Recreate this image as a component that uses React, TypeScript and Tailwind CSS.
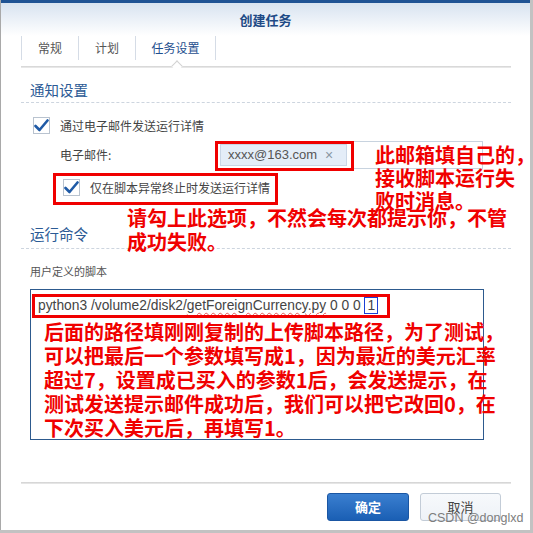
import React from "react";

const cjk = { fontFamily: '"Noto Sans CJK SC", "Noto Sans", sans-serif' };
const latin = { fontFamily: '"Liberation Sans", "Noto Sans CJK SC", sans-serif' };

function Check() {
  return (
    <div className="w-[17px] h-[17px] border border-[#b9c3cf] bg-white flex items-center justify-center shrink-0">
      <svg width="15" height="13" viewBox="0 0 15 13">
        <path d="M1.5 7 L5.5 11 L13.5 1.5" fill="none" stroke="#1f5aa6" strokeWidth="2.6" strokeLinecap="round" strokeLinejoin="round" />
      </svg>
    </div>
  );
}

export default function App() {
  return (
    <div className="w-[533px] h-[533px] bg-[#c2c2c2] relative overflow-hidden" style={cjk}>
      <div className="w-[530px] h-[530px] bg-white border-l border-[#a9a9a9] flex flex-col relative">
        <div className="h-[3px] bg-[#1f5394]" />
        <div className="h-[33px] bg-gradient-to-b from-[#d8e3f0] to-white flex items-center justify-center">
          <span className="text-[13px] font-bold text-[#1f4b86]">创建任务</span>
        </div>
        <div className="ml-[20px] flex h-[24px] text-[12px]">
          <div className="w-[57px] border-l border-[#d5dce6] flex items-center justify-center text-[#555]">常规</div>
          <div className="w-[57px] border-l border-[#d5dce6] flex items-center justify-center text-[#555]">计划</div>
          <div className="w-[81px] border-l border-r border-[#d5dce6] flex items-center justify-center text-[#1f4f8f]">任务设置</div>
        </div>
        <div className="ml-[20px] w-[490px] mt-[6px] relative">
          <div className="h-[2px] bg-gradient-to-b from-[#d2d2d2] to-[#eeeeee]" />
          <div className="absolute left-[152px] top-[-4px] w-[8px] h-[8px] bg-white border-l border-t border-[#d2d2d2] rotate-45" />
        </div>
        <div className="ml-[20px] w-[490px] flex flex-col">
          <div className="mt-[12px] h-[20px] leading-[20px] pl-[9px] text-[14.5px] text-[#2b5a95]">通知设置</div>
          <div className="mt-[2px] border-t border-dashed border-[#cdd5df]" />
          <div className="mt-[14px] h-[17px] flex items-center pl-[12px] gap-[10px] text-[12px] text-[#444]">
            <Check />
            <span>通过电子邮件发送运行详情</span>
          </div>
          <div className="mt-[7px] h-[28px] flex items-center text-[12px] text-[#444]">
            <div className="w-[194px] pl-[39px]">电子邮件:</div>
            <div className="w-[268px] h-[28px] border border-[#c8d3df] flex items-center pl-[4px]">
              <div className="w-[127px] h-[22px] bg-[#e4edf8] border border-[#c9d6e6] flex items-center pl-[7px] text-[13px] text-[#555]" style={latin}>
                <span>xxxx@163.com</span>
                <span className="ml-[8px] text-[#8a96a3] text-[14px]">×</span>
              </div>
            </div>
          </div>
          <div className="mt-[10px] h-[17px] flex items-center pl-[42px] gap-[10px] text-[12px] text-[#444]">
            <Check />
            <span>仅在脚本异常终止时发送运行详情</span>
          </div>
          <div className="mt-[28px] h-[20px] leading-[20px] pl-[9px] text-[14.5px] text-[#2b5a95]">运行命令</div>
          <div className="mt-[4px] border-t border-dashed border-[#cdd5df]" />
          <div className="mt-[14px] h-[16px] leading-[16px] pl-[9px] text-[11px] text-[#555]">用户定义的脚本</div>
          <div className="mt-[10px] ml-[9px] w-[454px] h-[151px] border border-[#2d5a8e] pl-[7px] pt-[6px]">
            <div className="h-[20px] leading-[20px] text-[13.8px] text-[#444] whitespace-nowrap" style={latin}>
              <span>python3 /volume2/disk2/</span>
              <span className="underline decoration-wavy decoration-[#e35a5a] decoration-1 underline-offset-2">getForeignCurrency.py</span>
              <span> 0 0 0 </span>
              <span className="border border-[#1a3fd6] px-[2px]">1</span>
            </div>
          </div>
          <div className="mt-[42px] h-[2px] bg-gradient-to-b from-[#d0d0d0] to-[#ececec]" />
          <div className="mt-[9px] flex justify-end gap-[11px] pr-[10px]">
            <div className="w-[82px] h-[28px] rounded-[3px] bg-gradient-to-b from-[#3a7fd0] to-[#1a5fb4] border border-[#1a56a3] flex items-center justify-center text-white text-[13px] font-bold">确定</div>
            <div className="w-[81px] h-[28px] rounded-[3px] bg-gradient-to-b from-[#f7f9fc] to-[#eef2f7] border border-[#c3ccd7] flex items-center justify-center text-[#444] text-[13px]">取消</div>
          </div>
        </div>

        {/* annotation overlays */}
        <div className="absolute left-[214px] top-[141px] w-[139px] h-[30px] border-[3px] border-[#f00000]" />
        <div className="absolute left-[52px] top-[173px] w-[225px] h-[32px] border-[3px] border-[#f00000]" />
        <div className="absolute left-[31px] top-[294px] w-[358px] h-[24px] border-[3px] border-[#f00000]" />
        <div className="absolute left-[374px] top-[143px] text-[20px] leading-[23px] font-bold text-[#f00000] whitespace-nowrap">
          <div>此邮箱填自己的，</div>
          <div>接收脚本运行失</div>
          <div>败时消息。</div>
        </div>
        <div className="absolute left-[126px] top-[206px] text-[20px] leading-[24px] font-bold text-[#f00000] whitespace-nowrap">
          <div>请勾上此选项，不然会每次都提示你，不管</div>
          <div>成功失败。</div>
        </div>
        <div className="absolute left-[43px] top-[320px] text-[20px] leading-[24px] font-bold text-[#f00000] whitespace-nowrap">
          <div>后面的路径填刚刚复制的上传脚本路径，为了测试，</div>
          <div>可以把最后一个参数填写成1，因为最近的美元汇率</div>
          <div>超过7，设置成已买入的参数1后，会发送提示，在</div>
          <div>测试发送提示邮件成功后，我们可以把它改回0，在</div>
          <div>下次买入美元后，再填写1。</div>
        </div>
        <div className="absolute left-[427px] top-[509px] text-[12.5px] leading-[18px] text-[#7d7d7d] whitespace-nowrap" style={latin}>CSDN @donglxd</div>
      </div>
    </div>
  );
}
